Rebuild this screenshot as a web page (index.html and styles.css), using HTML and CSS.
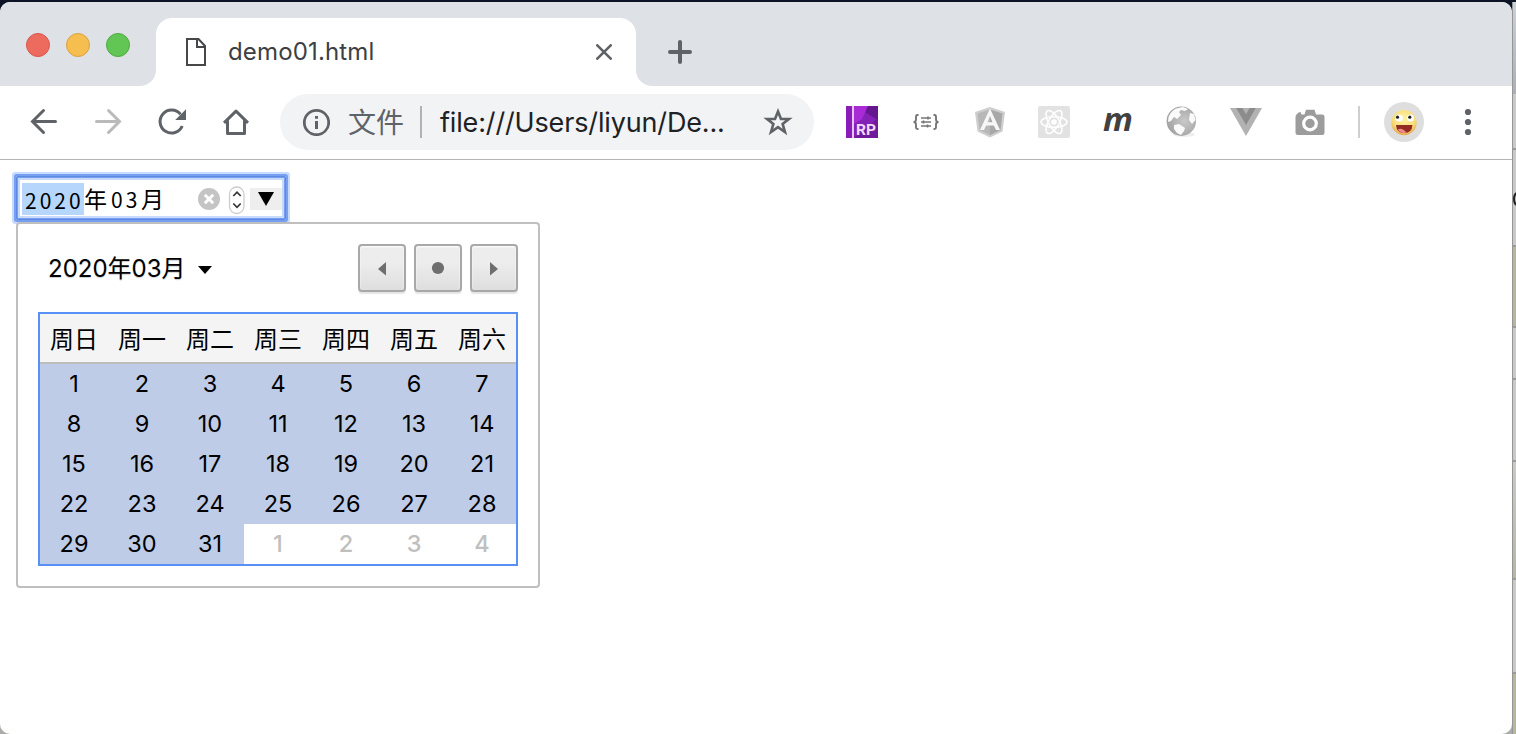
FILE: index.html
```html
<!DOCTYPE html>
<html lang="zh-CN">
<head>
<meta charset="utf-8">
<title>demo01.html</title>
<link rel="stylesheet" href="styles.css">
</head>
<body>
<div class="desktop">
  <div class="window">
    <header class="tabstrip">
      <div class="lights">
        <i class="light red"></i><i class="light yellow"></i><i class="light green"></i>
      </div>
      <div class="tab-slot">
        <div class="tab">
          <svg width="20" height="28" viewBox="0 0 20 28" fill="none" stroke="#464748" stroke-width="2"><path d="M1 1H12.5L19 8V27H1Z"/><path d="M11 1V9H19"/></svg>
          <span class="tab-title">demo01.html</span>
          <svg width="16" height="16" viewBox="0 0 16 16" fill="none" stroke="#5f6368" stroke-width="2.6" stroke-linecap="round"><path d="M1.3 1.3 14.7 14.7M14.7 1.3 1.3 14.7"/></svg>
        </div>
      </div>
      <div class="new-tab">
        <svg width="24" height="24" viewBox="0 0 24 24" fill="none" stroke="#5f6368" stroke-width="4" stroke-linecap="round"><path d="M2 12H22M12 2V22"/></svg>
      </div>
    </header>

    <nav class="toolbar">
      <div class="nav-icons">
        <svg width="32" height="32" viewBox="0 0 32 32" fill="none" stroke="#5f6368" stroke-width="3" stroke-linecap="round"><path d="M27.5 15.5H5M15.5 4.5 4.5 15.500 15.500 26.500"/></svg>
        <svg width="32" height="32" viewBox="0 0 32 32" fill="none" stroke="#bababa" stroke-width="3" stroke-linecap="round"><path d="M4.500 15.500H27M16.500 4.500 27.500 15.500 16.500 26.500"/></svg>
        <svg width="32" height="32" viewBox="0 0 32 32" fill="none" stroke="#5f6368" stroke-width="3"><path d="M26.200 20A11.500 11.500 0 1 1 24.500 8.300"/><path d="M30 3.200V14H19.200Z" fill="#5f6368" stroke="none"/></svg>
        <svg width="32" height="32" viewBox="0 0 32 32" fill="none" stroke="#5f6368" stroke-width="3" stroke-linejoin="round"><path d="M4 16.800 16 5.200 28 16.800M7.500 14.500V27.500H24.500V14.500"/></svg>
      </div>
      <div class="omnibox">
        <svg width="28" height="28" viewBox="0 0 28 28" fill="none" stroke="#5f6368"><circle cx="14.500" cy="14.500" r="12.200" stroke-width="2.800"/><path d="M14.500 13V21M14.500 8V10.800" stroke-width="3"/></svg>
        <span class="scheme">文件</span>
        <i class="divider"></i>
        <span class="url">file:///Users/liyun/De...</span>
        <svg width="32" height="32" viewBox="0 0 32 32" fill="none" stroke="#5f6368" stroke-width="2.6"><path d="M16 5.5 19 13H26.9L20.6 17.9 23 26 16 21.2 9 26 11.4 17.9 5.1 13H13Z"/></svg>
      </div>
      <div class="extensions">
        <svg width="32" height="32" viewBox="0 0 32 32"><rect width="32" height="32" rx="1" fill="#8322b5"/><path d="M8 0H32V14L22 8Z" fill="#65178f"/><path d="M8 0H22L16 13 8 18Z" fill="#a92bd6"/><path d="M8 32 32 12V32Z" fill="#701a9a"/><path d="M0 0H5V32H0Z" fill="#8a1bb8"/><path d="M7 0V32" stroke="#f1d9fa" stroke-width="1.8"/><text x="10" y="28.5" class="rp-text">RP</text></svg>
        <svg width="32" height="32" viewBox="0 0 32 32"><g fill="none" stroke="#767676" stroke-width="1.9"><path d="M8.5 9H7.5Q6 9 6 10.5V13.5Q6 16 3.5 16 6 16 6 18.5V21.5Q6 23 7.5 23H8.5M23.5 9H24.5Q26 9 26 10.5V13.5Q26 16 28.5 16 26 16 26 18.5V21.5Q26 23 24.5 23H23.5"/><path d="M11 12H21M11 16H21M11 20H21" stroke-width="1.5"/><path d="M18 10.5V13.5M13.5 14.5V17.5M17.5 18.5V21.5" stroke-width="1.6"/></g></svg>
        <svg width="32" height="32" viewBox="0 0 32 32"><path d="M16 1 31 6 28.5 25.5 16 31.5 3.5 25.5 1 6Z" fill="#cecece"/><path d="M16 3.5 28.5 7.5 26.5 24 16 29.3Z" fill="#a8a8a8"/><path d="M16 3.5 3.5 7.5 5.5 24 16 29.3Z" fill="#b8b8b8"/><path d="M16 2.5 6 24H10L12.2 19.4H19.8L22 24H26ZM16 10 18.5 16.3H13.5Z" fill="#f7f7f7" fill-rule="evenodd"/></svg>
        <svg width="32" height="32" viewBox="0 0 32 32"><rect width="32" height="32" rx="2" fill="#e2e2e2"/><g fill="none" stroke="#fff" stroke-width="1.5"><ellipse cx="16" cy="16" rx="13" ry="5.3"/><ellipse cx="16" cy="16" rx="13" ry="5.3" transform="rotate(60 16 16)"/><ellipse cx="16" cy="16" rx="13" ry="5.3" transform="rotate(120 16 16)"/></g><circle cx="16" cy="16" r="2.8" fill="#fff"/></svg>
        <span class="m-icon">m</span>
        <svg width="32" height="32" viewBox="0 0 32 32"><defs><radialGradient id="globe" cx=".6" cy=".5" r=".6"><stop offset="0" stop-color="#c9c9c9"/><stop offset="1" stop-color="#a2a2a2"/></radialGradient></defs><ellipse cx="18" cy="28.5" rx="11" ry="2.5" fill="#eee"/><circle cx="15.3" cy="15.2" r="14.7" fill="url(#globe)"/><path d="M2.500 11Q5 5 10 2.500L17 1 22 3 19 5 15 4 13 6 15 9 11 13 8 11 5 15 2 16ZM8 19 13 18 19 22 18 25 15 29 11 27 8 23ZM24 7 28 8 29.500 14 26 18 23 14Z" fill="#fafafa"/></svg>
        <svg width="32" height="32" viewBox="0 0 32 32"><path d="M0 2H32L16 30Z" fill="#b2b2b2"/><path d="M6.2 2H12.4L16 8.3 19.6 2H25.8L16 19Z" fill="#8c8c8c"/></svg>
        <svg width="32" height="32" viewBox="0 0 32 32"><path d="M3 8 4.500 6.500 6.500 6 7.500 8.500H10.500L12 3.800H20.500L22 8.500H28Q30.500 8.500 30.500 11V26.500Q30.500 29 28 29H4Q1.500 29 1.500 26.500V11Q1.500 9 3 8Z" fill="#9c9c9c"/><circle cx="16" cy="17.500" r="6.300" fill="#9c9c9c" stroke="#fff" stroke-width="3.200"/></svg>
      </div>
      <i class="toolbar-divider"></i>
      <svg width="40" height="40" viewBox="0 0 40 40"><defs><radialGradient id="face" cx=".5" cy=".35" r=".65"><stop offset="0" stop-color="#fff2a6"/><stop offset=".7" stop-color="#f8dc76"/><stop offset="1" stop-color="#e5a34c"/></radialGradient></defs><circle cx="20" cy="20" r="20" fill="#dedede"/><circle cx="20" cy="20.7" r="12.6" fill="url(#face)"/><ellipse cx="15" cy="16" rx="3.9" ry="3.5" fill="#fff"/><ellipse cx="26.500" cy="16" rx="3.500" ry="3.500" fill="#fff"/><circle cx="13.500" cy="15.200" r="1.600" fill="#222"/><circle cx="25.800" cy="15.200" r="1.600" fill="#222"/><path d="M12 23H28.500Q28 31 20.200 31 12.500 31 12 23Z" fill="#912b23"/><path d="M13.700 27.500Q18 25 22.500 30.500 17 32 13.700 27.500Z" fill="#f08a8a"/></svg>
      <svg class="menu" width="8" height="28" viewBox="0 0 8 28" fill="#5f6368"><circle cx="4" cy="4" r="3.1"/><circle cx="4" cy="14" r="3.1"/><circle cx="4" cy="24" r="3.1"/></svg>
    </nav>

    <main class="page">
      <div class="month-input">
        <span class="year-field">2020</span><span class="unit">年</span><span class="month-field">03</span><span class="unit">月</span>
        <svg class="clear" width="22" height="22" viewBox="0 0 22 22"><circle cx="11" cy="11" r="11" fill="#c4c4c4"/><path d="M6.8 6.8 15.2 15.2M15.2 6.8 6.8 15.2" stroke="#fff" stroke-width="3"/></svg>
        <svg class="spin" width="18" height="30" viewBox="0 0 18 30" fill="none"><rect x="1.5" y="2" width="14.5" height="26.5" rx="7.2" fill="#fff" stroke="#ccc" stroke-width="1.3"/><path d="M5.3 11 9 7.2 12.7 11M5.3 18.5 9 22.3 12.7 18.5" stroke="#333" stroke-width="1.7"/></svg>
        <span class="drop"><svg width="16" height="14" viewBox="0 0 16 14"><path d="M0 0H16L8 14Z"/></svg></span>
      </div>
      <section class="picker">
        <div class="picker-head">
          <span class="picker-title">2020<span class="cjk">年</span>03<span class="cjk">月</span></span>
          <svg class="title-arrow" width="14" height="8" viewBox="0 0 14 8"><path d="M0 0H14L7 8Z"/></svg>
          <div class="picker-buttons">
            <button class="btn"><svg width="16" height="16" viewBox="0 0 16 16"><path d="M12 2V15.5L4 9Z"/></svg></button>
            <button class="btn"><svg width="16" height="16" viewBox="0 0 16 16"><circle cx="8" cy="8" r="6.1"/></svg></button>
            <button class="btn"><svg width="16" height="16" viewBox="0 0 16 16"><path d="M4 2V15.5L12 9Z"/></svg></button>
          </div>
        </div>
        <div class="calendar">
          <div class="weekdays cjk"><span>周日</span><span>周一</span><span>周二</span><span>周三</span><span>周四</span><span>周五</span><span>周六</span></div>
          <div class="days">
            <span>1</span><span>2</span><span>3</span><span>4</span><span>5</span><span>6</span><span>7</span>
            <span>8</span><span>9</span><span>10</span><span>11</span><span>12</span><span>13</span><span>14</span>
            <span>15</span><span>16</span><span>17</span><span>18</span><span>19</span><span>20</span><span>21</span>
            <span>22</span><span>23</span><span>24</span><span>25</span><span>26</span><span>27</span><span>28</span>
            <span>29</span><span>30</span><span>31</span><span class="out">1</span><span class="out">2</span><span class="out">3</span><span class="out">4</span>
          </div>
        </div>
      </section>
    </main>
  </div>
  <aside class="behind"><i class="b1"></i><i class="b2"></i><i class="b3"><svg width="3" height="16" viewBox="0 0 3 16" fill="none" stroke="#222" stroke-width="2"><path d="M4 2Q1 3 1 8T4 14"/></svg></i><i class="b4"></i><i class="b5"></i><i class="b6"></i><i class="b7"></i><i class="b8"></i><i class="b9"></i></aside>
</div>
</body>
</html>
```

FILE: styles.css
```css
* { box-sizing: border-box; }
body { margin: 0; font-family: Inter, "Noto Sans CJK SC", sans-serif; color: #000; }
svg { display: block; flex: none; }
.desktop { width: 1516px; height: 734px; padding-top: 2px; display: flex; overflow: hidden; background: linear-gradient(#0c1425 0 20px, #aaaca9 20px); }
.window { width: 1512px; height: 732px; flex: none; background: #fff; border-radius: 10px; overflow: hidden; }

.tabstrip { height: 84px; display: flex; }
.lights { width: 156px; padding: 31px 0 0 26px; display: flex; gap: 16px; background: #dee1e6; border-radius: 0 0 16px 0; }
.light { width: 24px; height: 24px; border-radius: 50%; border: 1px solid; }
.red { background: #ed6a5e; border-color: #d9574c; }
.yellow { background: #f6be4f; border-color: #d9a243; }
.green { background: #62c654; border-color: #50a93f; }
.tab-slot { width: 480px; padding-top: 16px; background: linear-gradient(#dee1e6 50px, #fff 50px); }
.tab { height: 68px; display: flex; align-items: center; padding: 0 24px 0 30px; background: #fff; border-radius: 16px 16px 0 0; }
.tab-title { font-size: 24px; line-height: 30px; margin: 0 0 0 22px; color: #3c4043; letter-spacing: .15px; flex: 1; white-space: nowrap; }
.new-tab { flex: 1; padding: 38px 0 0 32px; background: #dee1e6; border-radius: 0 0 0 16px; }

.toolbar { height: 74px; border-bottom: 1px solid #b3b4b6; display: flex; align-items: center; padding: 0 0 1px 28px; }
.nav-icons { display: flex; gap: 32px; width: 252px; }
.omnibox { width: 534px; height: 56px; border-radius: 28px; background: #f1f3f4; display: flex; align-items: center; padding: 0 20px 0 22px; }
.scheme { font: 28px/40px "Noto Sans CJK SC", sans-serif; color: #5f6368; margin: -3px 0 0 18px; width: 56px; white-space: nowrap; }
.divider { width: 2px; height: 32px; background: #b0b2b5; margin: 0 18px 0 16px; }
.url { font-size: 27px; color: #202124; flex: 1; letter-spacing: -.15px; white-space: nowrap; padding-top: 1px; }
.extensions { display: flex; gap: 32px; margin-left: 32px; }
.rp-text { font: 700 15.5px Roboto, sans-serif; fill: #f3d8ff; }
.m-icon { width: 32px; height: 32px; text-align: center; font: italic 700 33px/26px "Open Sans", sans-serif; color: #414141; }
.toolbar-divider { width: 2px; height: 32px; background: #cfcfd0; margin: 0 24px 0 32px; }
.menu { margin-left: 40px; }

.page { padding: 16px; }
.month-input { width: 270px; height: 44px; border: 1px solid #5c8be1; border-radius: 1px; box-shadow: inset 0 0 0 1px #769ff1, inset 0 0 0 3px #c8daf9, 0 0 0 2px #769ff1, 0 0 0 4px #c7daff; display: flex; align-items: center; padding-left: 5px; font: 21px/34px "Noto Sans CJK SC", sans-serif; }
.year-field { width: 62px; height: 32px; margin-top: 2px; padding-left: 3px; background: #b6d6fc; letter-spacing: 3px; }
.month-field { letter-spacing: 3px; padding: 2px 0 0 4px; width: 34px; }
.cjk { font-family: "Noto Sans CJK SC", sans-serif; }
.unit { width: 23px; font-size: 23px; }
.clear { margin: 2px 0 0 34px; }
.spin { margin: 4px 0 0 8px; }
.drop { width: 32px; height: 22px; margin: 2px 0 0 4px; background: #eee; display: flex; align-items: center; justify-content: center; }
.picker { width: 524px; height: 366px; margin-top: 2px; border: 2px solid #bfbfbf; border-radius: 4px; padding: 20px; background: #fff; position: relative; }
.picker-head { height: 48px; display: flex; align-items: center; padding-left: 10px; }
.picker-title { font-size: 24px; line-height: 34px; margin-top: -1px; text-shadow: 0 1px 1px #0003; white-space: nowrap; }
.title-arrow { margin: 3px 0 0 12px; }
.picker-buttons { display: flex; gap: 8px; margin-left: auto; }
.btn { width: 48px; height: 48px; border: 2px solid #a8a8a8; border-radius: 4px; padding: 0; display: flex; align-items: center; justify-content: center; background: linear-gradient(#ededed 38%, #dedede); box-shadow: 0 2px 1px #e5e5e5, inset 0 1px 2px #fff; fill: #6e6e6e; }
.calendar { width: 480px; margin-top: 20px; border: 2px solid #5890f6; }
.weekdays { height: 50px; border-bottom: 2px solid #bdbdbd; background: #f4f4f4; font-size: 24px; line-height: 48px; }
.weekdays, .days { display: grid; grid-template-columns: repeat(7, 68px); text-align: center; }
.days { font-size: 23.5px; grid-auto-rows: 40px; line-height: 40px; }
.days span { background: #bfcce8; }
.days .out { background: #fff; color: #bfbfbf; font-weight: 500; }

/* Sliver of the window lying behind, right of the browser */
.behind { width: 4px; flex: none; display: flex; flex-direction: column; border-left: 1px solid #969696; }
.behind i { border-bottom: 2px solid #9b9b9b; background: #c9c9c9; flex: none; }
.behind .b1 { height: 92px; background: linear-gradient(#ccd0d8, #acafb3); border: 0; }
.b2 { height: 56px; }
.b3 { height: 97px; padding-top: 41px; }
.behind .b4 { height: 81px; background: #b4b79c; }
.b5 { height: 52px; }
.b6 { height: 82px; }
.behind .b7 { height: 118px; background: linear-gradient(#c9c9c9, #b5b7a2); }
.b8 { height: 94px; }
.behind .b9 { height: 60px; border: 0; background: #b4b896; }
```
